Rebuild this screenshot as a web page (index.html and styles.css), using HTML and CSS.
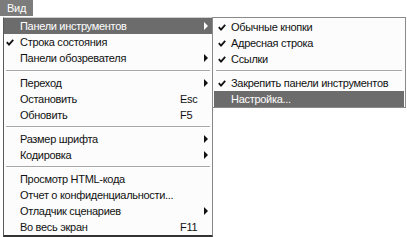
FILE: index.html
```html
<!DOCTYPE html>
<html lang="ru">
<head>
<meta charset="utf-8">
<link rel="stylesheet" href="styles.css">
</head>
<body>
<div class="menubar"><div class="bar-item">Вид</div></div>
<div class="menus">
  <div class="menu main">
    <div class="row hl"><span class="chk"></span><span class="lbl">Панели инструментов</span><span class="sc"></span><span class="arr"></span></div>
    <div class="row"><span class="chk"><svg width="8" height="7" viewBox="0 0 8 7"><path d="M0.8 3.2 L3 5.6 L7.2 0.8" fill="none" stroke="#111" stroke-width="1.8"/></svg></span><span class="lbl">Строка состояния</span><span class="sc"></span><span></span></div>
    <div class="row"><span class="chk"></span><span class="lbl">Панели обозревателя</span><span class="sc"></span><span class="arr"></span></div>
    <div class="sep sep9"></div>
    <div class="row"><span class="chk"></span><span class="lbl">Переход</span><span class="sc"></span><span class="arr"></span></div>
    <div class="row"><span class="chk"></span><span class="lbl">Остановить</span><span class="sc">Esc</span><span></span></div>
    <div class="row"><span class="chk"></span><span class="lbl">Обновить</span><span class="sc">F5</span><span></span></div>
    <div class="sep"></div>
    <div class="row"><span class="chk"></span><span class="lbl">Размер шрифта</span><span class="sc"></span><span class="arr"></span></div>
    <div class="row"><span class="chk"></span><span class="lbl">Кодировка</span><span class="sc"></span><span class="arr"></span></div>
    <div class="sep"></div>
    <div class="row"><span class="chk"></span><span class="lbl">Просмотр HTML-кода</span><span class="sc"></span><span></span></div>
    <div class="row"><span class="chk"></span><span class="lbl">Отчет о конфиденциальности...</span><span class="sc"></span><span></span></div>
    <div class="row"><span class="chk"></span><span class="lbl">Отладчик сценариев</span><span class="sc"></span><span class="arr"></span></div>
    <div class="row"><span class="chk"></span><span class="lbl">Во весь экран</span><span class="sc">F11</span><span></span></div>
  </div>
  <div class="menu sub">
    <div class="row"><span class="chk"><svg width="8" height="7" viewBox="0 0 8 7"><path d="M0.8 3.2 L3 5.6 L7.2 0.8" fill="none" stroke="#111" stroke-width="1.8"/></svg></span><span class="lbl">Обычные кнопки</span></div>
    <div class="row"><span class="chk"><svg width="8" height="7" viewBox="0 0 8 7"><path d="M0.8 3.2 L3 5.6 L7.2 0.8" fill="none" stroke="#111" stroke-width="1.8"/></svg></span><span class="lbl">Адресная строка</span></div>
    <div class="row"><span class="chk"><svg width="8" height="7" viewBox="0 0 8 7"><path d="M0.8 3.2 L3 5.6 L7.2 0.8" fill="none" stroke="#111" stroke-width="1.8"/></svg></span><span class="lbl">Ссылки</span></div>
    <div class="sep"></div>
    <div class="row"><span class="chk"><svg width="8" height="7" viewBox="0 0 8 7"><path d="M0.8 3.2 L3 5.6 L7.2 0.8" fill="none" stroke="#111" stroke-width="1.8"/></svg></span><span class="lbl">Закрепить панели инструментов</span></div>
    <div class="row hl"><span class="chk"></span><span class="lbl">Настройка...</span></div>
  </div>
</div>
</body>
</html>
```
FILE: styles.css
```css
html, body {
  margin: 0;
  padding: 0;
  background: #ffffff;
}
body {
  width: 407px;
  height: 237px;
  overflow: hidden;
  font-family: "Liberation Sans", Arial, sans-serif;
  font-size: 11px;
  letter-spacing: -0.3px;
  color: #111;
}
.menubar {
  height: 17px;
  display: flex;
}
.bar-item {
  width: 33px;
  height: 16px;
  background: #7c7c7c;
  color: #fff;
  box-sizing: border-box;
  padding-left: 7px;
  line-height: 16px;
}
.menus {
  display: flex;
  align-items: flex-start;
  padding-left: 3px;
}
.menu {
  background: #fcfcfc;
  box-sizing: border-box;
}
.main {
  width: 210px;
  height: 220px;
  border-left: 1px solid #5a5a5a;
  border-top: 1px solid #cfcfcf;
  border-right: 1px solid #888;
  border-bottom: 2px solid #333;
}
.sub {
  width: 194px;
  margin-left: -1px;
  border: 1px solid #8a8a8a;
  padding: 1px 1px 0 1px;
}
.row {
  height: 16px;
  display: grid;
  align-items: center;
  white-space: nowrap;
}
.main .row {
  grid-template-columns: 16px 160px 24px 8px;
}
.sub .row {
  grid-template-columns: 17px 1fr;
}
.hl {
  background: #6c6c6c;
  color: #fff;
}
.chk {
  display: flex;
  padding-left: 2px;
}
.sub .chk {
  padding-left: 4px;
}
.arr {
  width: 0;
  height: 0;
  border-top: 4px solid transparent;
  border-bottom: 4px solid transparent;
  border-left: 4px solid #111;
}
.hl .arr {
  border-left-color: #fff;
}
.sep {
  height: 8px;
  display: flex;
  align-items: center;
  padding: 0 2px 0 2px;
}
.sep9 {
  height: 9px;
}
.sep::before {
  content: "";
  flex: 1;
  height: 1px;
  background: #a8a8a8;
  border-bottom: 1px solid #fff;
}
```
